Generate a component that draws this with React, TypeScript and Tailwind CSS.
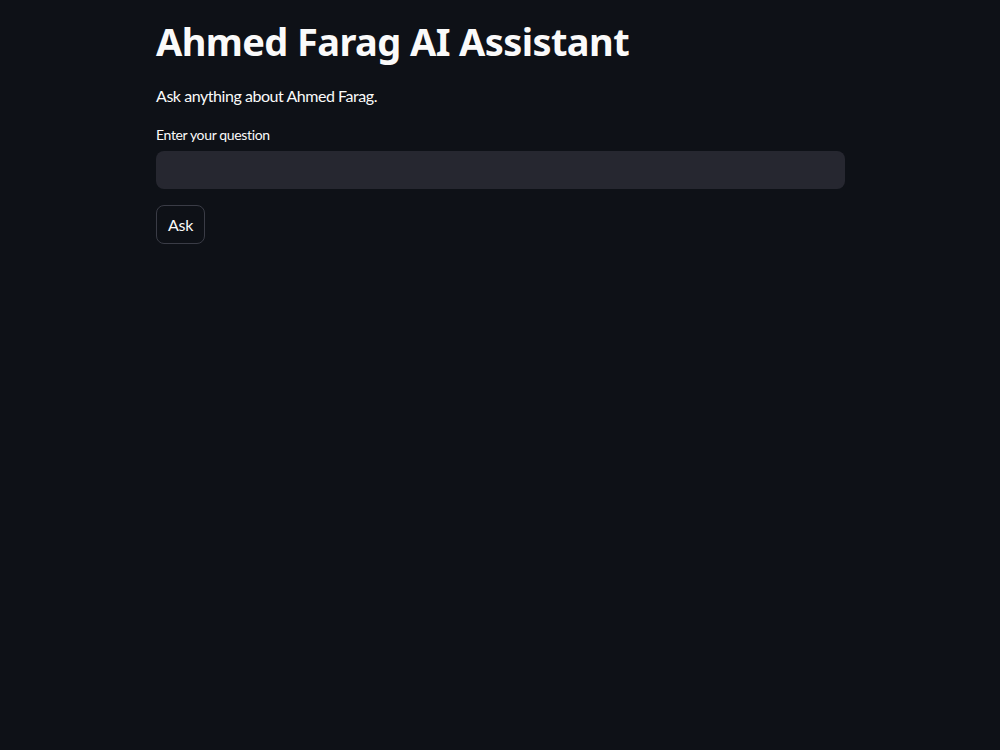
export default function App() {
  return (
    <div className="min-h-screen bg-[#0e1117] text-[#fafafa] font-['Lato','Noto_Sans',sans-serif]">
      <main className="w-[689px] ml-[156px] pt-[14px] flex flex-col">
        <h1 className="font-['Noto_Sans',sans-serif] text-[38px] font-bold leading-[54px] tracking-[-0.6px]">
          Ahmed Farag AI Assistant
        </h1>
        <p className="mt-[16px] text-[16px] leading-[24px] tracking-[-0.45px]">Ask anything about Ahmed Farag.</p>
        <label className="mt-[17px] text-[14px] leading-[20px] tracking-[-0.35px]">Enter your question</label>
        <input
          type="text"
          className="mt-[6px] h-[38px] w-full rounded-lg bg-[#262730] px-3 text-[16px] outline-none"
        />
        <div className="mt-[16px]">
          <button className="h-[39px] w-[49px] rounded-lg border border-[#3a3c46] bg-[#0e1117] text-[16px] tracking-[-0.3px] text-[#fafafa]">
            Ask
          </button>
        </div>
      </main>
    </div>
  );
}
